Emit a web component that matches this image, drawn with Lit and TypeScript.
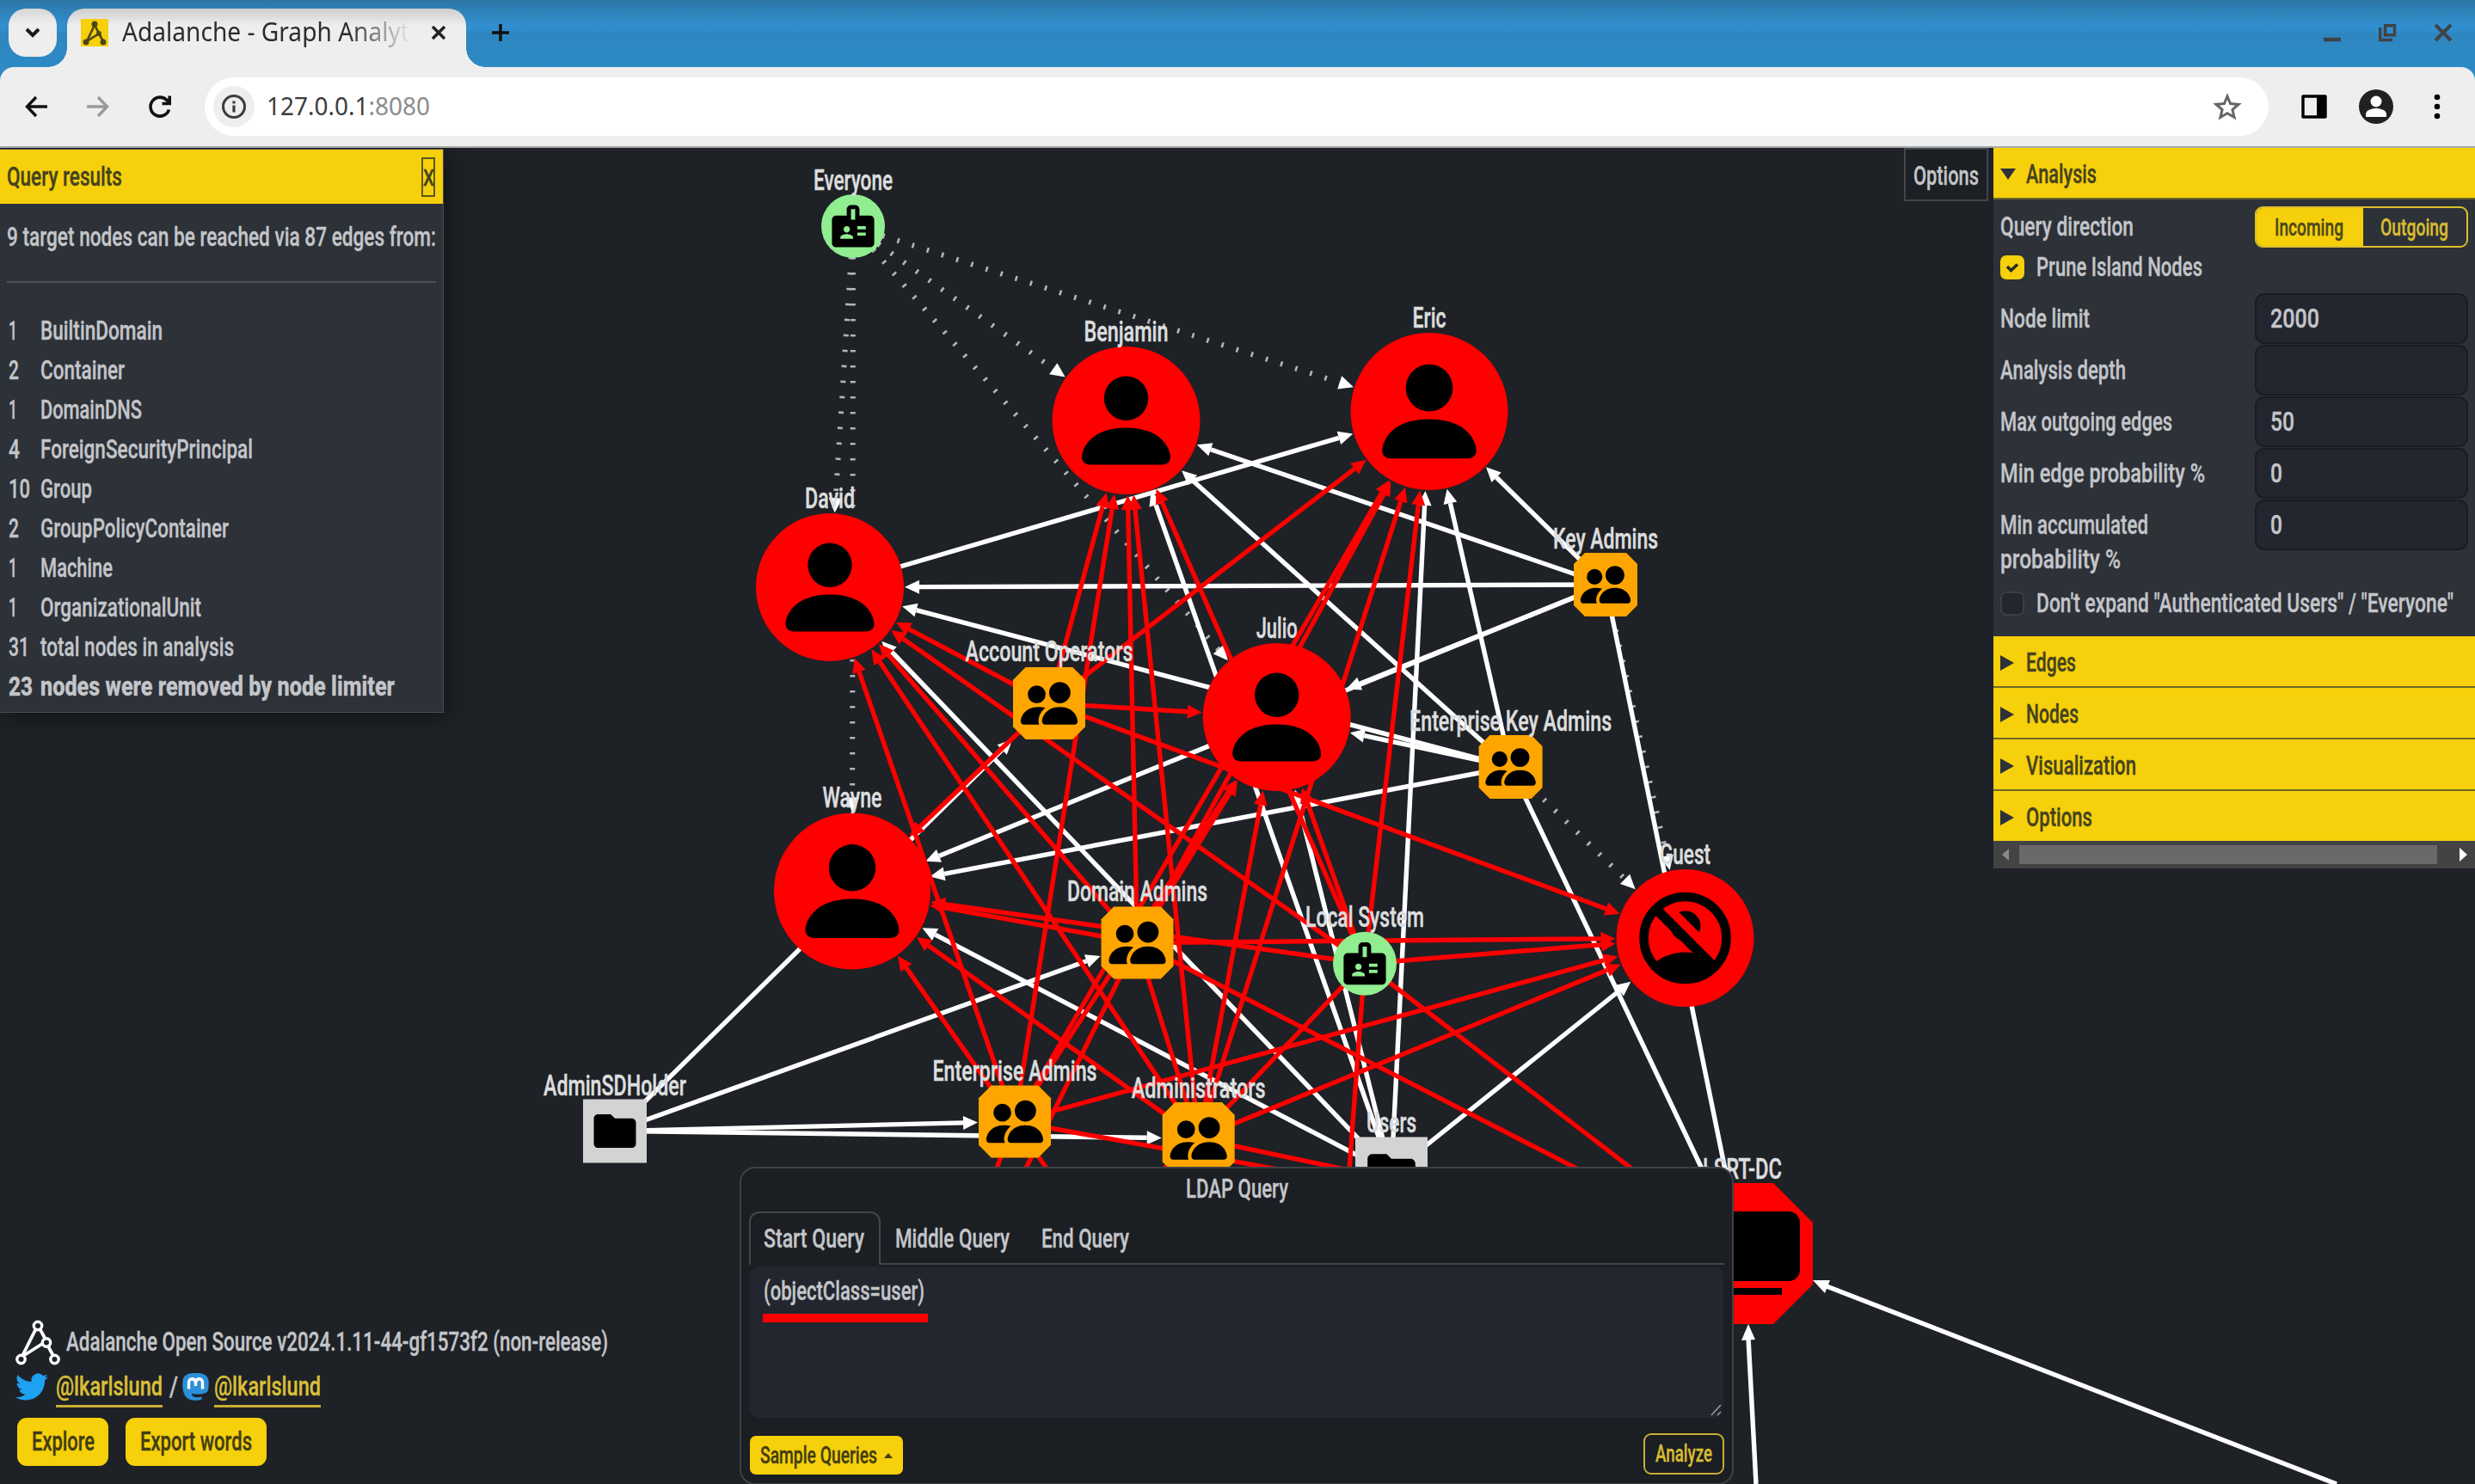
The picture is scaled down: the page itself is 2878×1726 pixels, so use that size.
import { LitElement, html, svg, css } from "lit";
import { customElement } from "lit/decorators.js";

/* Condensed label: real text fitted to a given advance width. */
const t = (text: string, w: number, size = 31, h = 40, base = 30, weight = 500) => html`<svg
  class="t" width=${w} height=${h} viewBox="0 0 ${w} ${h}"><text x="0" y=${base} font-size=${size}
  font-weight=${weight} textLength=${w} lengthAdjust="spacingAndGlyphs">${text}</text></svg>`;

type Kind = "user" | "group" | "badge" | "folder" | "guest" | "computer";
interface GNode { id: string; label: string; x: number; y: number; r: number; kind: Kind; lw: number; ly: number; }
const N = (id: string, label: string, x: number, y: number, r: number, kind: Kind, lw: number, ly: number): GNode =>
  ({ id, label, x, y, r, kind, lw, ly });

const NODES: GNode[] = [
  N("ev", "Everyone", 992, 263, 37, "badge", 92, 221),
  N("be", "Benjamin", 1309.5, 489, 86, "user", 98, 397),
  N("er", "Eric", 1662, 478.5, 91.5, "user", 39, 381),
  N("da", "David", 965, 683, 86, "user", 58, 591),
  N("ju", "Julio", 1484.7, 834, 86, "user", 48, 742),
  N("wa", "Wayne", 991, 1036.5, 91, "user", 69, 939),
  N("ka", "Key Admins", 1867, 680, 37, "group", 122, 638),
  N("ao", "Account Operators", 1220, 818, 42, "group", 195, 769),
  N("ek", "Enterprise Key Admins", 1756.6, 892, 37, "group", 235, 850),
  N("dm", "Domain Admins", 1322.5, 1096.5, 42, "group", 163, 1048),
  N("ls", "Local System", 1587, 1120.7, 37, "badge", 138, 1078),
  N("gu", "Guest", 1959.5, 1091, 80, "guest", 59, 1005),
  N("ad", "AdminSDHolder", 715, 1315.5, 37, "folder", 166, 1273.5),
  N("ea", "Enterprise Admins", 1180, 1304.5, 42, "group", 191, 1257),
  N("am", "Administrators", 1393.7, 1324, 42, "group", 156, 1277),
  N("us", "Users", 1618, 1364.5, 42, "folder", 58, 1317),
  N("dc", "LSRT-DC", 2026, 1458, 82, "computer", 92, 1371),
];
const at = (id: string) => NODES.find((n) => n.id === id)!;

const LINKS = {
  dot: ["ev-da", "ev-wa", "ev-be", "ev-er", "ev-ju", "ka-gu", "ek-gu"],
  white: [
    "da-er", "ka-be", "ka-er", "ka-da", "ka-ju", "ka-wa", "ka-dc", "ek-be", "ek-er", "ek-ju", "ek-da", "ek-wa", "ek-dc",
    "us-da", "us-wa", "us-be", "us-ju", "us-er", "us-gu", "ad-ao", "ad-dm", "ad-ea", "ad-am",
  ],
  red: [
    "ao-be", "ao-er", "ao-da", "ao-ju", "ao-wa", "ao-gu", "ls-da", "ls-wa", "ls-ju", "ls-gu", "ls-be", "ls-er", "ls-dc",
    "dm-wa", "dm-gu", "dm-be", "dm-er", "dm-da", "dm-ju", "dm-dc", "ea-be", "ea-er", "ea-da", "ea-ju", "ea-wa", "ea-gu",
    "ea-dc", "am-be", "am-er", "am-da", "am-ju", "am-wa", "am-gu", "am-dc",
  ],
};

const PERSON = "M3 14s-1 0-1-1 1-4 6-4 6 3 6 4-1 1-1 1H3Zm5-6a3 3 0 1 0 0-6 3 3 0 0 0 0 6Z";
const PEOPLE = "M7 14s-1 0-1-1 1-4 5-4 5 3 5 4-1 1-1 1H7Zm4-6a3 3 0 1 0 0-6 3 3 0 0 0 0 6Zm-5.784 6A2.238 2.238 0 0 1 5 13c0-1.355.68-2.75 1.936-3.72A6.325 6.325 0 0 0 5 9c-4 0-5 3-5 4s1 1 1 1h4.216ZM4.5 8a2.5 2.5 0 1 0 0-5 2.5 2.5 0 0 0 0 5Z";
const BADGE = "M20 7h-5V4c0-1.1-.9-2-2-2h-2c-1.1 0-2 .9-2 2v3H4c-1.1 0-2 .9-2 2v11c0 1.1.9 2 2 2h16c1.1 0 2-.9 2-2V9c0-1.1-.9-2-2-2zM9 12c.83 0 1.5.67 1.5 1.5S9.83 15 9 15s-1.5-.67-1.5-1.5S8.17 12 9 12zm3 6H6v-.75c0-1 2-1.5 3-1.5s3 .5 3 1.5V18zm1-9h-2V4h2v5zm5 7.5h-4V15h4v1.5zm0-3h-4V12h4v1.5z";
const FOLDER = "M10 4H4c-1.1 0-1.99.9-1.99 2L2 18c0 1.1.9 2 2 2h16c1.1 0 2-.9 2-2V8c0-1.1-.9-2-2-2h-8l-2-2z";
const TWITTER = "M23.953 4.57a10 10 0 01-2.825.775 4.958 4.958 0 002.163-2.723c-.951.555-2.005.959-3.127 1.184a4.92 4.92 0 00-8.384 4.482C7.69 8.095 4.067 6.13 1.64 3.162a4.822 4.822 0 00-.666 2.475c0 1.71.87 3.213 2.188 4.096a4.904 4.904 0 01-2.228-.616v.06a4.923 4.923 0 003.946 4.827 4.996 4.996 0 01-2.212.085 4.936 4.936 0 004.604 3.417 9.867 9.867 0 01-6.102 2.105c-.39 0-.779-.023-1.17-.067a13.995 13.995 0 007.557 2.209c9.053 0 13.998-7.496 13.998-13.985 0-.21 0-.42-.015-.63A9.935 9.935 0 0024 4.59z";

const octagon = (r: number, cut: number) =>
  `M${-r + cut} ${-r}H${r - cut}L${r} ${-r + cut}V${r - cut}L${r - cut} ${r}H${-r + cut}L${-r} ${r - cut}V${-r + cut}Z`;

@customElement("graph-canvas")
class GraphCanvas extends LitElement {
  static styles = css`
    :host { display: block; line-height: 0; }
    text { font-family: Roboto, "Liberation Sans", sans-serif; font-size: 34px; font-weight: 500; fill: #dcddde; stroke: #dcddde; stroke-width: .5; }
    .dot { stroke: #b4b5b7; stroke-width: 6; stroke-dasharray: 2.6 15.4; }
    .white { stroke: #fff; stroke-width: 5.4; }
    .red { stroke: #f00; stroke-width: 5.4; }
    .tip-dot, .tip-white { fill: #fff; }
    .tip-red { fill: #f00; }
  `;

  private edge(kind: string, pair: string) {
    const [s, d] = pair.split("-").map(at);
    const dx = d.x - s.x, dy = d.y - s.y, len = Math.hypot(dx, dy);
    const ux = dx / len, uy = dy / len;
    const round = d.kind === "user" || d.kind === "guest" || d.kind === "badge";
    const gap = (round ? d.r : d.r / Math.max(Math.abs(ux), Math.abs(uy))) + 1;
    const tx = d.x - ux * gap, ty = d.y - uy * gap;
    const bx = tx - ux * 17, by = ty - uy * 17;
    return svg`<line class=${kind} x1=${s.x} y1=${s.y} x2=${bx} y2=${by} />
      <path class=${"tip-" + kind} d=${`M${tx} ${ty}L${bx - uy * 8} ${by + ux * 8}L${bx + uy * 8} ${by - ux * 8}Z`} />`;
  }

  private body(n: GNode) {
    const { r } = n;
    switch (n.kind) {
      case "user":
        return svg`<circle r=${r} fill="#f00" /><path transform=${`scale(${r * 0.0997}) translate(-8 -8)`} d=${PERSON} />`;
      case "group":
        return svg`<path d=${octagon(r, r * 0.35)} fill="#ffa500" /><path transform=${`scale(${r * 0.0985}) translate(-8 -8)`} d=${PEOPLE} />`;
      case "badge":
        return svg`<circle r=${r} fill="#90ee90" /><path transform="scale(2.46) translate(-12 -12)" d=${BADGE} />`;
      case "folder":
        return svg`<rect x=${-r} y=${-r} width=${2 * r} height=${2 * r} fill="#d3d3d3" /><path transform=${`scale(${r * 0.0662}) translate(-12 -12)`} d=${FOLDER} />`;
      case "guest":
        return svg`<circle r=${r} fill="#f00" />
          <circle cx="0.5" cy="-14" r="17.5" />
          <path d="M-37 30Q-22 17 0 16.5Q22 17 37 30A48 48 0 0 1 -37 30Z" />
          <path d="M-28 -43L42 27" stroke="#f00" stroke-width="11" />
          <path d="M-34 -34L34 34" stroke="#000" stroke-width="11.5" />
          <circle r="48" fill="none" stroke="#000" stroke-width="10.5" />`;
      default:
        return svg`<path d=${octagon(r, 46)} fill="#f00" />
          <rect x="-67" y="-49" width="134" height="81" rx="13" /><rect x="-46" y="40" width="92" height="8" />`;
    }
  }

  render() {
    return html`<svg width="2878" height="1554" viewBox="0 172 2878 1554">
      ${LINKS.dot.map((p) => this.edge("dot", p))}
      ${LINKS.white.map((p) => this.edge("white", p))}
      ${LINKS.red.map((p) => this.edge("red", p))}
      <path class="red" fill="none" d="M1393 1324L1587 1120M1393 1324L1322 1096M1587 1120L1560 1480M1180 1304L1150 1382M1180 1304L1250 1408M1322 1096L1180 1385M1393 1324L1330 1380" />
      <path class="white" fill="none" d="M2717 1726L2124 1496M2042 1726L2033 1556" />
      <path class="tip-white" d="M2108 1489L2128 1489L2122 1504ZM2033 1540L2041 1558L2025 1559Z" />
      ${NODES.map((n) => svg`<g transform=${`translate(${n.x} ${n.y})`}>${this.body(n)}</g>`)}
      ${NODES.map((n) => svg`<text x=${n.x - n.lw / 2} y=${n.ly} textLength=${n.lw} lengthAdjust="spacingAndGlyphs">${n.label}</text>`)}
    </svg>`;
  }
}

@customElement("browser-chrome")
class BrowserChrome extends LitElement {
  static styles = css`
    :host { display: block; }
    * { box-sizing: border-box; }
    svg { display: block; flex: none; overflow: visible; }
    .strip { height: 78px; display: flex; align-items: flex-start; padding-left: 10px;
      background: linear-gradient(#2b75a3 0, #2f84bc 16px, #318fcf 30px, #308dcb 35px, #2e86c0 40px, #2d8ac5 78px); }
    .drop { width: 56px; height: 56px; margin-top: 10px; border-radius: 20px; display: grid; place-items: center; background: linear-gradient(#d6d6d6, #eee 18px); }
    .tab { position: relative; width: 464px; height: 68px; margin: 10px 0 0 12px; padding: 0 23px 12px 16px; border-radius: 20px 20px 0 0;
      display: flex; align-items: center; background: linear-gradient(#cecece, #eee 20px); }
    .tab::before, .tab::after { content: ""; position: absolute; bottom: 0; width: 22px; height: 22px; }
    .tab::before { left: -22px; background: radial-gradient(circle at 0 0, transparent 21.5px, #eee 22px); }
    .tab::after { right: -22px; background: radial-gradient(circle at 100% 0, transparent 21.5px, #eee 22px); }
    .title { margin-left: 16px; mask-image: linear-gradient(90deg, #000 78%, transparent 100%); }
    .x { margin-left: auto; }
    .plus { margin: 26px 0 0 28px; }
    .win { margin: 26px 25px 0 auto; display: flex; gap: 42px; }
    .barwrap { background: #2d8ac5; }
    .bar { height: 94px; background: #eee; border-radius: 16px 16px 0 0; border-bottom: 2px solid #a9a9ab; display: flex; align-items: center; padding: 0 34px 0 28px; }
    .nav { display: flex; gap: 44px; width: 210px; }
    .pill { width: 2400px; height: 68px; border-radius: 34px; background: #fff; display: flex; align-items: center; padding: 0 31px 0 10px; }
    .info { width: 48px; height: 48px; border-radius: 50%; background: #eee; display: grid; place-items: center; margin-right: 16px; }
    .star { margin-left: auto; }
    .right { margin-left: auto; display: flex; align-items: center; }
    .right svg + svg { margin-left: 37px; }
    text { font-family: "Noto Sans", "Open Sans", sans-serif; }
  `;
  render() {
    return html`
      <div class="strip">
        <div class="drop"><svg width="18" height="14" viewBox="0 0 18 14"><path d="M2 3l7 7 7-7" fill="none" stroke="#1a1a1a" stroke-width="4" /></svg></div>
        <div class="tab">
          <svg width="32" height="32" viewBox="0 0 32 32"><rect width="32" height="32" fill="#f6d00a" />
            <g fill="none" stroke="#4d4716" stroke-width="2.6"><path d="M16 7L7 26L21 17ZM21 17L26 26" /><circle cx="16" cy="6" r="2.2" fill="#4d4716" /><circle cx="21" cy="17" r="1.6" fill="#4d4716" /><circle cx="6" cy="27" r="2.2" fill="#4d4716" /><circle cx="26" cy="27" r="2.2" fill="#4d4716" /></g></svg>
          <svg class="title" width="336" height="44" viewBox="0 0 336 44"><text x="0" y="32" font-size="31" fill="#2c2c2c" textLength="334" lengthAdjust="spacingAndGlyphs">Adalanche - Graph Analyt</text></svg>
          <svg class="x" width="18" height="18" viewBox="0 0 18 18"><path d="M2 2l14 14M16 2L2 16" stroke="#222" stroke-width="3.4" /></svg>
        </div>
        <svg class="plus" width="24" height="24" viewBox="0 0 24 24"><path d="M12 2v20M2 12h20" stroke="#111" stroke-width="3.4" /></svg>
        <div class="win">
          <svg width="22" height="24"><path d="M1 20h20" stroke="#3f4347" stroke-width="4.5" /></svg>
          <svg width="22" height="24" fill="none" stroke="#3f4347" stroke-width="3.4"><path d="M2.7 6v14.5H17M8.5 3.7h11v11h-11z" /></svg>
          <svg width="24" height="24"><path d="M3 3l18 18M21 3L3 21" stroke="#3f4347" stroke-width="4" /></svg>
        </div>
      </div>
      <div class="barwrap"><div class="bar">
        <div class="nav">
          <svg width="28" height="28" fill="none" stroke="#111" stroke-width="3.4"><path d="M27 14H4M14 3L3.500 14L14 25" /></svg>
          <svg width="28" height="28" fill="none" stroke="#9a9a9a" stroke-width="3.400"><path d="M1 14H24M14 3L24.500 14L14 25" /></svg>
          <svg width="28" height="28" fill="none" stroke="#111" stroke-width="3.6"><path d="M24.500 17.500A11 11 0 1 1 22 6.500L25 9.500M25.200 1.500V10.500H16.500" /></svg>
        </div>
        <div class="pill">
          <div class="info"><svg width="30" height="30" fill="none" stroke="#3c3c3c" stroke-width="3"><circle cx="15" cy="15" r="12.500" /><path d="M15 13.500V21.500M15 8.500V11.500" stroke-width="3.200" /></svg></div>
          <svg width="190" height="44" viewBox="0 0 190 44"><text x="-2" y="32" font-size="28.500" fill="#3c3c3c" textLength="190" lengthAdjust="spacingAndGlyphs">127.0.0.1<tspan fill="#8c8c8c">:8080</tspan></text></svg>
          <svg class="star" width="34" height="32" viewBox="0 0 34 32"><path d="M17 4L20.600 12.600L30 13.400L22.900 19.500L25.100 28.500L17 23.700L8.900 28.500L11.100 19.500L4 13.400L13.400 12.600Z" fill="none" stroke="#666" stroke-width="3" /></svg>
        </div>
        <div class="right">
          <svg width="30" height="30"><path d="M2 3h26v24H2z" fill="none" stroke="#000" stroke-width="3.400" stroke-linejoin="round" /><path d="M18 2h11v26H18z" /></svg>
          <svg width="40" height="40"><circle cx="20" cy="20" r="20" fill="#1f2221" /><circle cx="20" cy="14" r="6.500" fill="#fff" /><path d="M8 32v-3c0-5 7-7 12-7s12 2 12 7v3z" fill="#fff" /></svg>
          <svg width="24" height="40" viewBox="-7 0 24 40"><circle cx="7" cy="9" r="3.300" /><circle cx="7" cy="20" r="3.300" /><circle cx="7" cy="31" r="3.300" /></svg>
        </div>
      </div></div>`;
  }
}

@customElement("app-root")
class AppRoot extends LitElement {
  static styles = css`
    :host { display: block; width: 2878px; height: 1726px; overflow: hidden; background: #1e2126; }
    * { box-sizing: border-box; }
    svg { display: block; flex: none; overflow: visible; }
    .t { fill: #c3c5c9; stroke: #c3c5c9; stroke-width: .35; font-family: Roboto, "Liberation Sans", sans-serif; }
    .stage { position: relative; width: 2878px; height: 1554px; overflow: hidden; background: #1e2126; }
    .yellow { background: #f6d00a; }
    .yellow .t { fill: #45421f; stroke: #45421f; }
    .btn .t { fill: #423d12; stroke: #423d12; }

    .results { position: absolute; left: 0; top: 1px; width: 516px; height: 656px; background: #2d3138; border: 1px solid #4a4e54; border-left: 0; box-shadow: 4px 4px 26px rgba(0, 0, 0, .45); }
    .rhead { height: 63px; display: flex; align-items: center; justify-content: space-between; padding: 0 9px 0 8px; }
    .xbox { width: 16px; height: 46px; border: 2px solid #5c571f; display: grid; place-items: center; }
    .summary { padding: 19px 8px 0; height: 90px; }
    .rule { height: 2px; margin: 0 8px 33px; background: #4e5258; }
    .row { height: 46px; display: grid; grid-template-columns: 37px auto; padding-left: 10px; align-items: center; }

    .optbtn { position: absolute; left: 2214px; top: 0; width: 98px; height: 62px; border: 2px solid #42464b; background: #1c1f23; display: grid; place-items: center; padding-top: 3px; }
    .side { position: absolute; left: 2318px; top: 0; width: 560px; height: 838px; background: #2d3138; }
    .acc { height: 60px; display: flex; align-items: center; gap: 14px; padding: 3px 0 0 8px; border-bottom: 2px solid #6d692c; }
    .acc.top { gap: 12px; padding-top: 4px; }
    .acc.last { border-bottom: 0; height: 58px; }
    .form { height: 508px; padding: 8px 8px 0; }
    .frow { display: flex; justify-content: space-between; }
    .grp { width: 248px; height: 48px; border: 2px solid #dcbf2c; border-radius: 9px; display: flex; overflow: hidden; }
    .on { width: 124px; padding-right: 3px; background: #f6d00a; display: grid; place-items: center; }
    .on .t { fill: #4c481a; stroke: #4c481a; }
    .off { flex: 1; display: grid; place-items: center; padding-right: 2px; }
    .off .t { fill: #d8bc31; stroke: #d8bc31; }
    .chk { display: flex; align-items: center; gap: 14px; height: 40px; margin: 3px 0 10px; }
    .box { width: 28px; height: 28px; border-radius: 7px; background: #23262f; border: 2px solid #3a3e45; }
    .box.ticked { background: #f6d00a; border: 0; display: grid; place-items: center; }
    .field { height: 60px; }
    .lab { padding-top: 10px; }
    .input { width: 248px; height: 59px; border-radius: 11px; background: #23262f; border: 2px solid #1a1c21; padding: 8px 0 0 16px; }
    .chk.second { margin: 41px 0 0; }
    .scroll { height: 32px; background: #434343; display: flex; align-items: center; justify-content: space-between; padding: 0 8px; }
    .thumb { width: 486px; height: 22px; margin-right: 14px; background: #696969; }

    .about { position: absolute; left: 18px; top: 1362px; }
    .line { display: flex; align-items: center; }
    .brand { height: 56px; gap: 7px; }
    .brand .t { margin-top: -2px; }
    .social { height: 46px; }
    .link { border-bottom: 3px solid #c9ad33; height: 42px; margin-top: 6px; }
    .link .t { fill: #d9bf36; stroke: #d9bf36; }
    .btns { margin: 13px 0 0 2px; gap: 20px; }
    .btn { height: 56px; border-radius: 11px; background: #f6d00a; display: flex; align-items: center; justify-content: center; }
    .b1 { width: 106px; } .b2 { width: 164px; }

    .query { position: absolute; left: 860px; top: 1185px; width: 1156px; height: 370px; border: 2px solid #3d4146; border-radius: 18px; background: #1b1e23; padding: 6px 9px 0 9px; }
    .qt { display: flex; justify-content: center; }
    .tabs { display: flex; height: 64px; margin-top: 4px; }
    .tabq { display: flex; align-items: center; padding: 3px 17px 0; border-bottom: 2px solid #42464b; height: 62px; }
    .tabq.active { border: 2px solid #42464b; border-bottom: 0; border-radius: 12px 12px 0 0; width: 153px; padding: 0 15px; }
    .tabq.mid { width: 170px; padding-left: 17px; }
    .tabq.fill { flex: 1; padding-left: 17px; }
    .area { position: relative; height: 176px; margin: 0 1px; border-radius: 10px; background: #23262f; padding: 9px 0 0 16px; }
    .err { width: 192px; height: 10px; margin: 6px 0 0 -1px; background: #f00; }
    .grip { position: absolute; right: 3px; bottom: 3px; }
    .foot { display: flex; justify-content: space-between; align-items: flex-end; height: 66px; padding-left: 1px; }
    .sample { width: 178px; height: 45px; border-radius: 7px; gap: 8px; }
    .analyze { width: 94px; height: 48px; border: 2px solid #c9ad33; border-radius: 9px; display: grid; place-items: center; }
    .analyze .t { fill: #d8bc31; stroke: #d8bc31; }
  `;

  private rows: [string, number, string, number, boolean?][] = [
    ["1", 10, "BuiltinDomain", 142], ["2", 12, "Container", 98], ["1", 10, "DomainDNS", 118], ["4", 13, "ForeignSecurityPrincipal", 247],
    ["10", 25, "Group", 60], ["2", 12, "GroupPolicyContainer", 219], ["1", 10, "Machine", 84], ["1", 10, "OrganizationalUnit", 187],
    ["31", 24, "total nodes in analysis", 225], ["23", 28, "nodes were removed by node limiter", 412, true],
  ];
  private fields: [string, number, string, number][] = [
    ["Node limit", 104, "2000", 57], ["Analysis depth", 146, "", 0], ["Max outgoing edges", 200, "50", 28], ["Min edge probability %", 238, "0", 14],
    ["Min accumulated", 172, "0", 14],
  ];
  private sections: [string, number][] = [["Edges", 58], ["Nodes", 61], ["Visualization", 128], ["Options", 77]];

  render() {
    return html`
      <browser-chrome></browser-chrome>
      <div class="stage">
        <graph-canvas></graph-canvas>

        <section class="results">
          <div class="rhead yellow">${t("Query results", 134)}<span class="xbox">${t("X", 13, 25, 28, 24)}</span></div>
          <div class="summary">${t("9 target nodes can be reached via 87 edges from:", 499)}</div>
          <div class="rule"></div>
          ${this.rows.map(([n, nw, s, sw, b]) => html`<div class="row">${t(n, nw, 31, 40, 30, b ? 800 : 500)}${t(s, sw, 31, 40, 30, b ? 800 : 500)}</div>`)}
        </section>

        <div class="optbtn">${t("Options", 76)}</div>
        <aside class="side">
          <div class="acc top yellow"><svg width="18" height="16"><path d="M0 1h18L9 14z" fill="#2d3138" /></svg>${t("Analysis", 82)}</div>
          <div class="form">
            <div class="frow">${t("Query direction", 155, 31, 40, 34)}
              <div class="grp"><span class="on">${t("Incoming", 80, 28)}</span><span class="off">${t("Outgoing", 79, 28)}</span></div></div>
            <div class="chk"><span class="box ticked"><svg width="16" height="12"><path d="M2 5l4.500 4.500L14 2.500" fill="none" stroke="#2a2d20" stroke-width="3.600" /></svg></span>${t("Prune Island Nodes", 193)}</div>
            ${this.fields.map(([l, lw, v, vw]) => html`<div class="frow field"><span class="lab">${t(l, lw)}${l === "Min accumulated" ? t("probability %", 140) : ""}</span>
              <span class="input">${v ? t(v, vw) : ""}</span></div>`)}
            <div class="chk second"><span class="box"></span>${t(`Don't expand "Authenticated Users" / "Everyone"`, 485)}</div>
          </div>
          ${this.sections.map(([s, w], i) => html`<div class="acc yellow ${i === 3 ? "last" : ""}"><svg width="16" height="18"><path d="M0 0v18L16 9z" fill="#2d3138" /></svg>${t(s, w)}</div>`)}
          <div class="scroll"><svg width="10" height="16"><path d="M10 1v14L2 8z" fill="#8a8a8a" /></svg><span class="thumb"></span><svg width="10" height="16"><path d="M0 0v16L9 8z" fill="#fff" /></svg></div>
        </aside>

        <div class="about">
          <div class="line brand"><svg width="52" height="54" viewBox="0 0 52 54" fill="none" stroke="#fff" stroke-width="3.400">
            <path d="M24 10L8.500 41M28 10L34 21M37.500 30L43.500 41M31 28L9 42" stroke-width="3.800" /><circle cx="26" cy="7" r="4.700" /><circle cx="36" cy="26.500" r="4.700" /><circle cx="6.500" cy="46" r="4.700" /><circle cx="45.500" cy="46" r="4.700" /></svg>
            ${t("Adalanche Open Source v2024.1.11-44-gf1573f2 (non-release)", 630)}</div>
          <div class="line social">
            <svg width="38" height="38" viewBox="0 0 24 24" fill="#1da1f2"><path d=${TWITTER} /></svg>
            <svg width="9" height="1"></svg><span class="link">${t("@lkarlslund", 124, 31, 38, 28)}</span>
            <svg width="8" height="1"></svg>${t("/", 10)}<svg width="5" height="1"></svg>
            <svg width="31" height="32" viewBox="0 0 31 32"><path d="M15.500 0C23 0 30 1.500 30.500 9c.3 5 .2 8-.6 11-1.300 4.300-8.400 4.800-14.400 4.400-3.200-.2-4.500-.7-4.500-.7 0 4.500 5.500 5.300 11.600 3.700v3C17 33 6.500 32.500 3 26 .3 21 0 14 .5 9 1 1.500 8 0 15.500 0z" fill="#2b90d9" /><path d="M7.500 18.500V11c0-5.500 7-6 8 0v4-4c1-6 8-5.500 8 0v7.500" fill="none" stroke="#fff" stroke-width="3.400" /></svg>
            <svg width="6" height="1"></svg><span class="link">${t("@lkarlslund", 124, 31, 38, 28)}</span>
          </div>
          <div class="line btns"><span class="btn b1">${t("Explore", 73)}</span><span class="btn b2">${t("Export words", 130)}</span></div>
        </div>

        <section class="query">
          <div class="qt">${t("LDAP Query", 119, 31, 40, 28)}</div>
          <div class="tabs"><span class="tabq active">${t("Start Query", 117)}</span><span class="tabq mid">${t("Middle Query", 133)}</span><span class="tabq fill">${t("End Query", 102)}</span></div>
          <div class="area">${t("(objectClass=user)", 187)}<div class="err"></div>
            <svg class="grip" width="12" height="12"><path d="M1 12L12 0M8 12L12 8" stroke="#9a9ca0" stroke-width="1.500" /></svg></div>
          <div class="foot"><span class="btn sample">${t("Sample Queries", 136, 27, 36, 27)}<svg width="10" height="6"><path d="M0 6h10L5 0z" fill="#423d12" /></svg></span><span class="analyze">${t("Analyze", 66, 27, 36, 27)}</span></div>
        </section>
      </div>`;
  }
}
